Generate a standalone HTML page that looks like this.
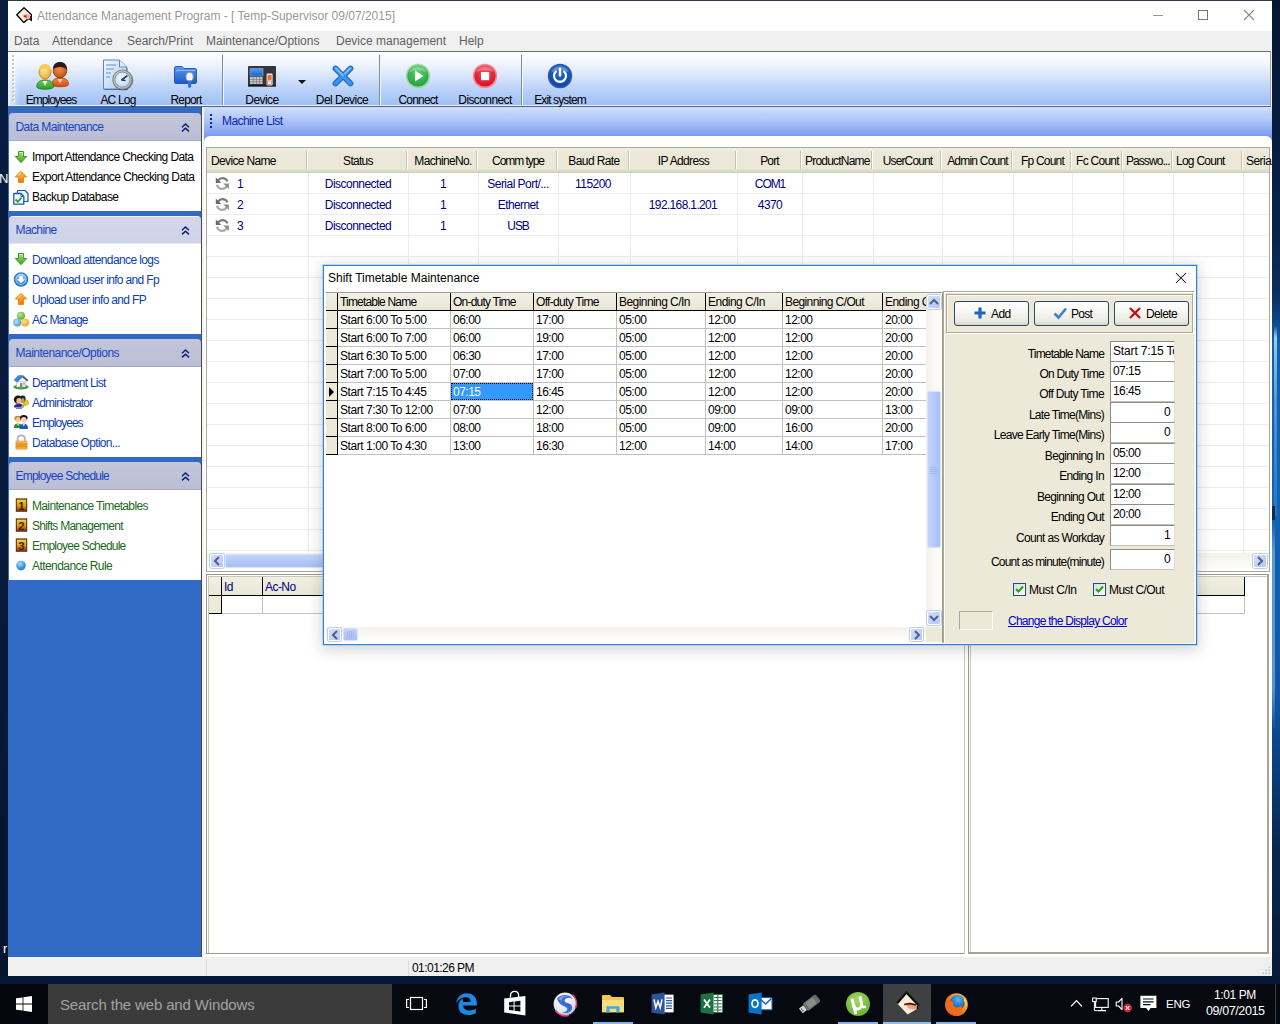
<!DOCTYPE html>
<html>
<head>
<meta charset="utf-8">
<title>Attendance Management Program</title>
<style>
*{box-sizing:border-box;margin:0;padding:0}
html,body{width:1280px;height:1024px;overflow:hidden}
body{position:relative;font-family:"Liberation Sans",sans-serif;font-size:12px;color:#000;background:#0a1d3a}
body>div,body>svg{position:absolute}
.t{white-space:nowrap;line-height:14px;height:14px;font-size:12px;letter-spacing:-0.55px}
.s{white-space:nowrap;line-height:16px;height:16px;font-size:12px}
.c{text-align:center}
.r{text-align:right}
.nv{color:#000080}
</style>
</head>
<body>
<div style="left:0px;top:0px;width:1280px;height:984px;background:#0a1a34"></div>
<div style="left:0px;top:0px;width:8px;height:984px;background:linear-gradient(180deg,#081c40 0%,#071a3a 60%,#06142c 100%)"></div>
<div style="left:1272px;top:0px;width:8px;height:984px;background:linear-gradient(180deg,#051630 0%,#071c3e 14%,#08244c 24%,#0b2e60 30%,#1260b0 35%,#1262b4 50%,#1058a6 70%,#0c4488 76%,#09284f 86%,#071a38 100%)"></div>
<div style="left:1274px;top:326px;width:3px;height:190px;background:linear-gradient(180deg,rgba(150,215,245,0) 0%,rgba(150,215,245,.95) 6%,rgba(120,190,240,.6) 40%,rgba(90,170,230,.25) 100%)"></div>
<div style="left:1272px;top:506px;width:3px;height:14px;background:#0a2a58"></div>
<div style="left:1272px;top:520px;width:3px;height:210px;background:linear-gradient(180deg,rgba(110,175,225,.0),rgba(110,175,225,.75) 15%,rgba(110,175,225,.7) 80%,rgba(110,175,225,0))"></div>
<div style="left:0px;top:976px;width:1280px;height:8px;background:#06183a"></div>
<div class="s" style="left:0px;top:171px;color:#fff;font-size:13px;letter-spacing:0;left:-1px">N</div>
<div class="s" style="left:0px;top:941px;color:#fff;font-size:13px;letter-spacing:0;left:3px">r</div>
<div style="left:8px;top:0px;width:1264px;height:976px;background:#f0f0f0;border-top:1px solid #2b3a4f"></div>
<div style="left:8px;top:1px;width:1264px;height:30px;background:#fff"></div>
<svg style="left:16px;top:7px;" width="16" height="16" viewBox="0 0 16 16"><path d="M8 0.8L15.4 7.6V13.2L12.6 11.4L7.8 15.6L0.8 7.8Z" fill="#f6ecdc" stroke="#0a0a0a" stroke-width="1.4" stroke-linejoin="miter"/><ellipse cx="11" cy="9.6" rx="3.6" ry="2.6" fill="#efb9a0"/><path d="M7.4 8.6L10.6 8.2L10.8 10.4L8.6 10.2Z" fill="#b02814"/><path d="M14.6 9V12.6" stroke="#4a2a1a" stroke-width="1.2"/></svg>
<div class="s" style="left:37px;top:8px;color:#999;letter-spacing:0">Attendance Management Program - [ Temp-Supervisor 09/07/2015]</div>
<svg style="left:1152px;top:9px;" width="12" height="12" viewBox="0 0 12 12"><path d="M1 6.5H11" stroke="#999" stroke-width="1" fill="none"/></svg>
<svg style="left:1197px;top:9px;" width="12" height="12" viewBox="0 0 12 12"><rect x="1.5" y="1.5" width="9" height="9" stroke="#777" stroke-width="1" fill="none"/></svg>
<svg style="left:1243px;top:9px;" width="12" height="12" viewBox="0 0 12 12"><path d="M1 1L11 11M11 1L1 11" stroke="#888" stroke-width="1.1" fill="none"/></svg>
<div class="s" style="left:14px;top:33px;color:#606060;letter-spacing:0">Data</div>
<div class="s" style="left:52px;top:33px;color:#606060;letter-spacing:0">Attendance</div>
<div class="s" style="left:127px;top:33px;color:#606060;letter-spacing:0">Search/Print</div>
<div class="s" style="left:206px;top:33px;color:#606060;letter-spacing:0">Maintenance/Options</div>
<div class="s" style="left:336px;top:33px;color:#606060;letter-spacing:0">Device management</div>
<div class="s" style="left:459px;top:33px;color:#606060;letter-spacing:0">Help</div>
<div style="left:8px;top:51px;width:1263px;height:56px;border-top:1px solid #6d6d6d;border-bottom:1px solid #5a6478;border-right:1px solid #9aa;box-shadow:inset 0 -1px 0 #e8f0fd;background:linear-gradient(180deg,#fdfeff 0%,#f2f6fd 20%,#dce7fb 42%,#bcd2f8 68%,#9cc0f6 100%)"></div>
<div style="left:8px;top:52px;width:12px;height:53px;background:linear-gradient(90deg,rgba(255,255,255,.75),rgba(255,255,255,0))"></div>
<svg style="left:11px;top:54px;" width="5" height="50" viewBox="0 0 5 50"><rect x="2" y="2" width="2" height="2" fill="#fff"/><rect x="1" y="1" width="2" height="2" fill="#b9ccc6"/><rect x="2" y="6" width="2" height="2" fill="#fff"/><rect x="1" y="5" width="2" height="2" fill="#b9ccc6"/><rect x="2" y="10" width="2" height="2" fill="#fff"/><rect x="1" y="9" width="2" height="2" fill="#b9ccc6"/><rect x="2" y="14" width="2" height="2" fill="#fff"/><rect x="1" y="13" width="2" height="2" fill="#b9ccc6"/><rect x="2" y="18" width="2" height="2" fill="#fff"/><rect x="1" y="17" width="2" height="2" fill="#b9ccc6"/><rect x="2" y="22" width="2" height="2" fill="#fff"/><rect x="1" y="21" width="2" height="2" fill="#b9ccc6"/><rect x="2" y="26" width="2" height="2" fill="#fff"/><rect x="1" y="25" width="2" height="2" fill="#b9ccc6"/><rect x="2" y="30" width="2" height="2" fill="#fff"/><rect x="1" y="29" width="2" height="2" fill="#b9ccc6"/><rect x="2" y="34" width="2" height="2" fill="#fff"/><rect x="1" y="33" width="2" height="2" fill="#b9ccc6"/><rect x="2" y="38" width="2" height="2" fill="#fff"/><rect x="1" y="37" width="2" height="2" fill="#b9ccc6"/><rect x="2" y="42" width="2" height="2" fill="#fff"/><rect x="1" y="41" width="2" height="2" fill="#b9ccc6"/><rect x="2" y="46" width="2" height="2" fill="#fff"/><rect x="1" y="45" width="2" height="2" fill="#b9ccc6"/></svg>
<div class="t c" style="left:-49px;top:93px;width:200px;;letter-spacing:-0.97px">Employees</div>
<div class="t c" style="left:18px;top:93px;width:200px;;letter-spacing:-0.81px">AC Log</div>
<div class="t c" style="left:86px;top:93px;width:200px;;letter-spacing:-0.81px">Report</div>
<div class="t c" style="left:162px;top:93px;width:200px;;letter-spacing:-0.54px">Device</div>
<div class="t c" style="left:242px;top:93px;width:200px;;letter-spacing:-0.56px">Del Device</div>
<div class="t c" style="left:318px;top:93px;width:200px;;letter-spacing:-0.78px">Connect</div>
<div class="t c" style="left:385px;top:93px;width:200px;;letter-spacing:-0.6px">Disconnect</div>
<div class="t c" style="left:460px;top:93px;width:200px;;letter-spacing:-0.88px">Exit system</div>
<div style="left:222px;top:55px;width:2px;height:50px;border-left:1px solid #7f8ca8;border-right:1px solid #f4f7fd"></div>
<div style="left:379px;top:55px;width:2px;height:50px;border-left:1px solid #7f8ca8;border-right:1px solid #f4f7fd"></div>
<div style="left:521px;top:55px;width:2px;height:50px;border-left:1px solid #7f8ca8;border-right:1px solid #f4f7fd"></div>
<svg style="left:297px;top:79px;" width="10" height="6" viewBox="0 0 10 6"><path d="M1 1H9L5 5Z" fill="#111"/></svg>
<svg style="left:36px;top:60px;" width="34" height="31" viewBox="0 0 34 31"><defs><radialGradient id="tbA" cx=".4" cy=".35" r=".7"><stop offset="0" stop-color="#fde9a0"/><stop offset="1" stop-color="#e8a830"/></radialGradient><radialGradient id="tbB" cx=".45" cy=".4" r=".7"><stop offset="0" stop-color="#f09048"/><stop offset="1" stop-color="#b84810"/></radialGradient><linearGradient id="tbC" x1="0" y1="0" x2="0" y2="1"><stop offset="0" stop-color="#6cd058"/><stop offset="1" stop-color="#2a9a28"/></linearGradient><linearGradient id="tbD" x1="0" y1="0" x2="0" y2="1"><stop offset="0" stop-color="#f88838"/><stop offset="1" stop-color="#d84810"/></linearGradient></defs><path d="M16 24.5C16 19.5 19 18 24 18S32.5 19.5 32.5 24.5C32.5 27.5 16 27.5 16 24.5Z" fill="url(#tbD)" stroke="#a83808" stroke-width=".8"/><path d="M21.5 19L24 23.5L26.5 19Z" fill="#f4e0d0"/><ellipse cx="24" cy="10.5" rx="6.8" ry="7.4" fill="url(#tbB)" stroke="#7a3410" stroke-width=".8"/><path d="M17 9.5C17 4 20 2 24 2S31.2 4.5 31 10C29 6.5 21 6 17 9.5Z" fill="#2a1a10"/><path d="M0.8 27C0.8 22 3.8 20 9 20S17.5 22 17.5 27C17.5 30 0.8 30 0.8 27Z" fill="url(#tbC)" stroke="#1c7a20" stroke-width=".8"/><path d="M6.5 21L9 26L11.5 21Z" fill="#eef4e8"/><ellipse cx="9" cy="12" rx="6" ry="7" fill="url(#tbA)" stroke="#d08418" stroke-width=".9"/><path d="M2.8 11C2.8 6 5.5 4.2 9 4.2S15.4 6 15.2 11C13.5 8 5 7.6 2.8 11Z" fill="#f4cc50"/></svg>
<svg style="left:102px;top:59px;" width="33" height="33" viewBox="0 0 33 33"><defs><linearGradient id="tbE" x1="0" y1="0" x2="1" y2="1"><stop offset="0" stop-color="#f4f9ff"/><stop offset="1" stop-color="#a8c8f0"/></linearGradient><radialGradient id="tbF" cx=".45" cy=".4" r=".6"><stop offset="0" stop-color="#f4fbff"/><stop offset="1" stop-color="#b8dcf4"/></radialGradient></defs><path d="M2.5 2H18.5L25.5 9V31H2.5Z" fill="#1c2c50" opacity=".75"/><path d="M1.5 1H17.5L24.5 8V30H1.5Z" fill="url(#tbE)" stroke="#5a86c8" stroke-width="1"/><path d="M17.5 1V8H24.5" fill="#dcecfc" stroke="#5a86c8" stroke-width="1"/><path d="M4 6H14M4 10H12M4 14H9M4 18H8" stroke="#88b0e4" stroke-width="1.4"/><circle cx="21" cy="21.2" r="10.2" fill="#3a3a3a" opacity=".7"/><circle cx="20.4" cy="20.6" r="10.2" fill="#8a8a8a"/><circle cx="20.4" cy="20.6" r="9" fill="#c8c8c8"/><circle cx="20.4" cy="20.6" r="7.6" fill="url(#tbF)" stroke="#7a7a7a" stroke-width=".8"/><path d="M19.4 21L25.4 16.6" stroke="#2a3a4a" stroke-width="1.7"/><path d="M19.4 21L23.6 21.4" stroke="#2a3a4a" stroke-width="1.5"/></svg>
<svg style="left:173px;top:65px;" width="26" height="24" viewBox="0 0 26 24"><defs><linearGradient id="tbG" x1="0" y1="0" x2="0" y2="1"><stop offset="0" stop-color="#5a9af0"/><stop offset="1" stop-color="#1c58c8"/></linearGradient></defs><path d="M1.5 3C1.5 2 2 1.5 3 1.5H9L11 3.5H22C23 3.5 23.5 4 23.5 5V17C23.5 18 23 18.5 22 18.5H3C2 18.5 1.5 18 1.5 17Z" fill="url(#tbG)" stroke="#2a5ab8" stroke-width="1"/><path d="M3 5.5H22" stroke="#8ab8f8" stroke-width="1"/><ellipse cx="16.6" cy="11.8" rx="3.6" ry="4.4" fill="#f4f4ec" stroke="#9a9a8a" stroke-width=".8"/><path d="M15 15.6H18.2V22L16.6 23L15 22Z" fill="#2a78e0"/></svg>
<svg style="left:248px;top:65px;" width="29" height="23" viewBox="0 0 29 23"><defs><linearGradient id="tbH" x1="0" y1="0" x2="0" y2="1"><stop offset="0" stop-color="#4aa0f0"/><stop offset="1" stop-color="#1c60c8"/></linearGradient></defs><rect x="0" y="1" width="28" height="20.5" rx="1" fill="#33363c"/><rect x="0" y="19.5" width="28" height="2" fill="#1c1e22"/><rect x="2" y="3.5" width="13" height="7.5" fill="url(#tbH)" stroke="#9ab" stroke-width=".6"/><rect x="2" y="12" width="12.5" height="7" fill="#c8c8c8"/><path d="M2 14.4H14.5M2 16.8H14.5M5.2 12V19M8.4 12V19M11.6 12V19" stroke="#777" stroke-width=".7"/><rect x="18.6" y="8.5" width="6" height="12" rx="1" fill="#e8e8e8"/><rect x="19.6" y="10" width="4" height="5" fill="#e87028"/><rect x="19.6" y="16" width="4" height="3.6" fill="#f4f4f4" stroke="#c33" stroke-width=".5"/></svg>
<svg style="left:331px;top:64px;" width="24" height="24" viewBox="0 0 24 24"><path d="M4.5 4.5L19.5 19.5M19.5 4.5L4.5 19.5" stroke="#1c62c8" stroke-width="5.8" stroke-linecap="round" fill="none"/><path d="M4.5 4.5L19.5 19.5M19.5 4.5L4.5 19.5" stroke="#3c94f0" stroke-width="3.8" stroke-linecap="round" fill="none"/><path d="M4.8 4.2L12 11.4M19.2 4.2L14 9.4" stroke="#8ac4fa" stroke-width="1.6" stroke-linecap="round" fill="none"/></svg>
<svg style="left:405px;top:63px;" width="26" height="26" viewBox="0 0 26 26"><defs><radialGradient id="tbI" cx=".5" cy=".3" r=".8"><stop offset="0" stop-color="#5cd070"/><stop offset="1" stop-color="#1c9838"/></radialGradient></defs><circle cx="13" cy="13" r="12.2" fill="#9cd8a4"/><circle cx="13" cy="13" r="10.6" fill="url(#tbI)"/><path d="M4 9.5A9.6 9.6 0 0 1 22 9.5A14 10 0 0 0 4 9.5Z" fill="#fff" opacity=".28"/><path d="M10 7.5L18.5 13L10 18.5Z" fill="#fff"/></svg>
<svg style="left:472px;top:63px;" width="26" height="26" viewBox="0 0 26 26"><defs><radialGradient id="tbJ" cx=".5" cy=".3" r=".8"><stop offset="0" stop-color="#f8485c"/><stop offset="1" stop-color="#d00c20"/></radialGradient></defs><circle cx="13" cy="13" r="12.2" fill="#f08a94"/><circle cx="13" cy="13" r="10.6" fill="url(#tbJ)"/><path d="M4 9.5A9.6 9.6 0 0 1 22 9.5A14 10 0 0 0 4 9.5Z" fill="#fff" opacity=".28"/><rect x="9" y="9" width="8.2" height="8.2" fill="#fff"/></svg>
<svg style="left:547px;top:63px;" width="26" height="26" viewBox="0 0 26 26"><defs><radialGradient id="tbK" cx=".5" cy=".3" r=".8"><stop offset="0" stop-color="#2c6cd8"/><stop offset="1" stop-color="#0c3c9c"/></radialGradient></defs><circle cx="13" cy="13" r="12.2" fill="#2a58b0"/><circle cx="13" cy="13" r="10.6" fill="url(#tbK)"/><path d="M4 9.5A9.6 9.6 0 0 1 22 9.5A14 10 0 0 0 4 9.5Z" fill="#fff" opacity=".28"/><path d="M8.8 8.6A6 6 0 1 0 17.2 8.6" stroke="#fff" stroke-width="2.2" fill="none" stroke-linecap="round"/><path d="M13 5.6V12.4" stroke="#fff" stroke-width="2.4" stroke-linecap="round"/></svg>
<div style="left:8px;top:107px;width:193px;height:850px;background:#316ac5"></div>
<div style="left:201px;top:107px;width:3px;height:850px;background:#f4f4f4;border-left:1px solid #4a4a4a"></div>
<div style="left:9px;top:113px;width:192px;height:28px;background:linear-gradient(180deg,#c3c6d9 0%,#bbbed5 100%);border-radius:4px 4px 0 0;border-bottom:1px solid #a4a8c0"></div>
<div class="t" style="left:15.5px;top:120px;color:#1444c4;letter-spacing:-0.59px">Data Maintenance</div>
<svg style="left:180px;top:122px;" width="10" height="11" viewBox="0 0 10 11"><path d="M2 5.2L5.5 2L9 5.2M2 9.4L5.5 6.2L9 9.4" stroke="#0c2078" stroke-width="1.5" fill="none"/></svg>
<div style="left:9px;top:141px;width:192px;height:70px;background:#fff;border-top:1px solid #fff"></div>
<div class="t" style="left:32px;top:150px;color:#000;letter-spacing:-0.58px">Import Attendance Checking Data</div>
<svg style="left:13px;top:148.6px;" width="16" height="16" viewBox="0 0 16 16"><defs><linearGradient id="g1" x1="0" y1="0" x2="0" y2="1"><stop offset="0" stop-color="#a4e57e"/><stop offset="1" stop-color="#3fa024"/></linearGradient></defs><path d="M5.5 2.5H10.5V7.5H13.7L8 13.7L2.3 7.5H5.5Z" fill="url(#g1)" stroke="#3c9a28" stroke-width="1" stroke-linejoin="round"/><path d="M6.5 3.5H9.5V6" stroke="#d8f7c4" stroke-width="1" fill="none" opacity=".8"/></svg>
<div class="t" style="left:32px;top:170px;color:#000;letter-spacing:-0.57px">Export Attendance Checking Data</div>
<svg style="left:13px;top:168.6px;" width="16" height="16" viewBox="0 0 16 16"><defs><linearGradient id="g2" x1="0" y1="0" x2="0" y2="1"><stop offset="0" stop-color="#ffc24a"/><stop offset="1" stop-color="#f07408"/></linearGradient></defs><path d="M8 2.3L13.7 8H10.5V13.5H5.5V8H2.3Z" fill="url(#g2)" stroke="#f08a18" stroke-width="1" stroke-linejoin="round"/><path d="M8 4L5 7" stroke="#ffe6a8" stroke-width="1" fill="none" opacity=".8"/></svg>
<div class="t" style="left:32px;top:190px;color:#000;letter-spacing:-0.55px">Backup Database</div>
<svg style="left:13px;top:188.6px;" width="16" height="16" viewBox="0 0 16 16"><path d="M4.5 1.5H12L15 4.5V12.5H4.5Z" fill="#e8f2fc" stroke="#1c5aa8" stroke-width="1.2" stroke-linejoin="round"/><path d="M0.8 4.5H8L10.8 7.5V15.2H0.8Z" fill="#f2fafe" stroke="#1c5aa8" stroke-width="1.3" stroke-linejoin="round"/><path d="M8 4.5V7.5H10.8" fill="none" stroke="#1c5aa8" stroke-width="1"/><path d="M2.5 10.5L4.8 12.8L8.5 8.6" stroke="#2ea02e" stroke-width="1.8" fill="none"/></svg>
<div style="left:9px;top:216px;width:192px;height:28px;background:linear-gradient(180deg,#d8d2ea 0%,#d2d6ea 30%,#cdd2e8 100%);border-radius:4px 4px 0 0;border-bottom:1px solid #e4e6f2;border-top:1px solid #f4f6fc"></div>
<div class="t" style="left:15.5px;top:223px;color:#1444c4;letter-spacing:-0.61px">Machine</div>
<svg style="left:180px;top:225px;" width="10" height="11" viewBox="0 0 10 11"><path d="M2 5.2L5.5 2L9 5.2M2 9.4L5.5 6.2L9 9.4" stroke="#0c2078" stroke-width="1.5" fill="none"/></svg>
<div style="left:9px;top:244px;width:192px;height:90px;background:#fff;border-top:1px solid #fff"></div>
<div class="t" style="left:32px;top:253px;color:#0a3cb8;letter-spacing:-0.61px">Download attendance logs</div>
<svg style="left:13px;top:251.2px;" width="16" height="16" viewBox="0 0 16 16"><defs><linearGradient id="g4" x1="0" y1="0" x2="0" y2="1"><stop offset="0" stop-color="#a4e57e"/><stop offset="1" stop-color="#3fa024"/></linearGradient></defs><path d="M5.5 2.5H10.5V7.5H13.7L8 13.7L2.3 7.5H5.5Z" fill="url(#g4)" stroke="#3c9a28" stroke-width="1" stroke-linejoin="round"/><path d="M6.5 3.5H9.5V6" stroke="#d8f7c4" stroke-width="1" fill="none" opacity=".8"/></svg>
<div class="t" style="left:32px;top:273px;color:#0a3cb8;letter-spacing:-0.66px">Download user info and Fp</div>
<svg style="left:13px;top:271.2px;" width="16" height="16" viewBox="0 0 16 16"><defs><linearGradient id="g5" x1="0" y1="0" x2="0" y2="1"><stop offset="0" stop-color="#9fd0f8"/><stop offset="1" stop-color="#2878d0"/></linearGradient></defs><circle cx="8" cy="8.5" r="6.6" fill="url(#g5)" stroke="#2a78c8" stroke-width="1.3"/><circle cx="8" cy="8.5" r="5" fill="none" stroke="#d6ecfd" stroke-width=".8" opacity=".7"/><path d="M6.3 5H9.7V8.3H12L8 12.3L4 8.3H6.3Z" fill="#fff"/></svg>
<div class="t" style="left:32px;top:293px;color:#0a3cb8;letter-spacing:-0.67px">Upload user info and FP</div>
<svg style="left:13px;top:291.2px;" width="16" height="16" viewBox="0 0 16 16"><defs><linearGradient id="g6" x1="0" y1="0" x2="0" y2="1"><stop offset="0" stop-color="#ffc24a"/><stop offset="1" stop-color="#f07408"/></linearGradient></defs><path d="M8 2.3L13.7 8H10.5V13.5H5.5V8H2.3Z" fill="url(#g6)" stroke="#f08a18" stroke-width="1" stroke-linejoin="round"/><path d="M8 4L5 7" stroke="#ffe6a8" stroke-width="1" fill="none" opacity=".8"/></svg>
<div class="t" style="left:32px;top:313px;color:#0a3cb8;letter-spacing:-0.86px">AC Manage</div>
<svg style="left:13px;top:311.2px;" width="16" height="16" viewBox="0 0 16 16"><defs><radialGradient id="g7" cx=".4" cy=".35" r=".7"><stop offset="0" stop-color="#b8ee88"/><stop offset="1" stop-color="#4aa828"/></radialGradient><radialGradient id="g8" cx=".4" cy=".35" r=".7"><stop offset="0" stop-color="#b8e2fc"/><stop offset="1" stop-color="#3c94dc"/></radialGradient><radialGradient id="g9" cx=".4" cy=".35" r=".7"><stop offset="0" stop-color="#ffe488"/><stop offset="1" stop-color="#f0a010"/></radialGradient></defs><circle cx="8" cy="4.8" r="4" fill="url(#g7)"/><circle cx="4.2" cy="11.6" r="4" fill="url(#g8)"/><circle cx="12" cy="11.6" r="4" fill="url(#g9)"/></svg>
<div style="left:9px;top:339px;width:192px;height:28px;background:linear-gradient(180deg,#c3c6d9 0%,#bbbed5 100%);border-radius:4px 4px 0 0;border-bottom:1px solid #a4a8c0"></div>
<div class="t" style="left:15.5px;top:346px;color:#1444c4;letter-spacing:-0.52px">Maintenance/Options</div>
<svg style="left:180px;top:348px;" width="10" height="11" viewBox="0 0 10 11"><path d="M2 5.2L5.5 2L9 5.2M2 9.4L5.5 6.2L9 9.4" stroke="#0c2078" stroke-width="1.5" fill="none"/></svg>
<div style="left:9px;top:367px;width:192px;height:90px;background:#fff;border-top:1px solid #fff"></div>
<div class="t" style="left:32px;top:376px;color:#0a3cb8;letter-spacing:-0.74px">Department List</div>
<svg style="left:13px;top:374.2px;" width="16" height="16" viewBox="0 0 16 16"><ellipse cx="8" cy="13" rx="7.6" ry="2.4" fill="#3e9a40"/><path d="M3.5 7.5H12.5V13H3.5Z" fill="#f4f4f0" stroke="#9aa" stroke-width=".5"/><path d="M0.6 6.2L5.2 1.2H10.2L15.4 6.2L13.6 7.4L9.6 3.2L4.2 8.6Z" fill="#3c84d8"/><path d="M9.7 3L14.8 6.6" stroke="#555" stroke-width="1.2"/><rect x="7" y="9" width="2.4" height="4" fill="#8a8a80"/><rect x="10.2" y="8.6" width="1.6" height="2" fill="#9ab"/></svg>
<div class="t" style="left:32px;top:396px;color:#0a3cb8;letter-spacing:-0.79px">Administrator</div>
<svg style="left:13px;top:394.2px;" width="16" height="16" viewBox="0 0 16 16"><ellipse cx="5.2" cy="5.6" rx="4.4" ry="4.2" fill="#141414"/><ellipse cx="9.6" cy="5" rx="3" ry="3.4" fill="#222"/><ellipse cx="6" cy="6.8" rx="2.7" ry="2.9" fill="#e8c080"/><ellipse cx="9.8" cy="6.6" rx="1.8" ry="2.5" fill="#c89858"/><path d="M1 13.5C1 10.5 3 9.8 6 9.8S10.5 10.5 10.5 13.5Z" fill="#2a2a90"/><path d="M3 14.4H9" stroke="#6a8ad8" stroke-width="1.2"/><path d="M10.2 8.6L14.6 6.2L15.8 9.8L12 11.6Z" fill="#e8d020" stroke="#a89000" stroke-width=".6"/><path d="M8.4 13.4L11.6 10.4" stroke="#c8a810" stroke-width="1.8"/></svg>
<div class="t" style="left:32px;top:416px;color:#0a3cb8;letter-spacing:-0.97px">Employees</div>
<svg style="left:13px;top:414.2px;" width="16" height="16" viewBox="0 0 16 16"><ellipse cx="4.8" cy="4.4" rx="3.4" ry="2.6" fill="#b88a2c"/><ellipse cx="5" cy="5.8" rx="2.5" ry="2.6" fill="#f0c890"/><path d="M0.8 14C0.8 10.6 2.4 9.4 5 9.4S8.6 10.6 8.6 14Z" fill="#2e8a30"/><path d="M3.6 9.6L5 12L6.2 9.6Z" fill="#e8f0e8"/><ellipse cx="10.8" cy="3.8" rx="3.8" ry="2.8" fill="#161616"/><ellipse cx="10.8" cy="5.8" rx="2.8" ry="2.9" fill="#f4cfc0"/><path d="M6.6 15C6.6 11.2 8 9.8 10.8 9.8S15 11.2 15 15Z" fill="#1c5ab8"/><path d="M9.6 10L10.8 12.4L12 10Z" fill="#e4ecf8"/></svg>
<div class="t" style="left:32px;top:436px;color:#0a3cb8;letter-spacing:-0.68px">Database Option...</div>
<svg style="left:13px;top:434.2px;" width="16" height="16" viewBox="0 0 16 16"><defs><linearGradient id="g13" x1="0" y1="0" x2="0" y2="1"><stop offset="0" stop-color="#f8c060"/><stop offset=".5" stop-color="#f09a28"/><stop offset="1" stop-color="#f4b050"/></linearGradient></defs><path d="M4.6 8V4.6C4.6 2.6 6 1.4 8.2 1.4S11.8 2.6 11.8 4.6V8" stroke="#b4b4b4" stroke-width="1.8" fill="none"/><rect x="2.8" y="7" width="11.4" height="8.2" rx=".8" fill="url(#g13)" stroke="#e89838" stroke-width=".6"/><path d="M3 10H14M3 12.4H14" stroke="#e08418" stroke-width=".8"/></svg>
<div style="left:9px;top:462px;width:192px;height:28px;background:linear-gradient(180deg,#c3c6d9 0%,#bbbed5 100%);border-radius:4px 4px 0 0;border-bottom:1px solid #a4a8c0"></div>
<div class="t" style="left:15.5px;top:469px;color:#1444c4;letter-spacing:-0.78px">Employee Schedule</div>
<svg style="left:180px;top:471px;" width="10" height="11" viewBox="0 0 10 11"><path d="M2 5.2L5.5 2L9 5.2M2 9.4L5.5 6.2L9 9.4" stroke="#0c2078" stroke-width="1.5" fill="none"/></svg>
<div style="left:9px;top:490px;width:192px;height:90px;background:#fff;border-top:1px solid #fff"></div>
<div class="t" style="left:32px;top:499px;color:#1a6a1a;letter-spacing:-0.65px">Maintenance Timetables</div>
<svg style="left:13px;top:497.2px;" width="16" height="16" viewBox="0 0 16 16"><defs><linearGradient id="g14" x1="0" y1="0" x2="0" y2="1"><stop offset="0" stop-color="#f0d428"/><stop offset=".55" stop-color="#d8a018"/><stop offset="1" stop-color="#8a4a10"/></linearGradient></defs><rect x="2.8" y="1.4" width="11.4" height="13.4" fill="#5a2810"/><rect x="3.8" y="2.6" width="9.4" height="11" fill="url(#g14)"/><text x="8.5" y="12.6" text-anchor="middle" font-family="Liberation Sans" font-weight="bold" font-size="11.5" fill="#4a1c08">1</text></svg>
<div class="t" style="left:32px;top:519px;color:#1a6a1a;letter-spacing:-0.74px">Shifts Management</div>
<svg style="left:13px;top:517.2px;" width="16" height="16" viewBox="0 0 16 16"><defs><linearGradient id="g15" x1="0" y1="0" x2="0" y2="1"><stop offset="0" stop-color="#f0d428"/><stop offset=".55" stop-color="#d8a018"/><stop offset="1" stop-color="#8a4a10"/></linearGradient></defs><rect x="2.8" y="1.4" width="11.4" height="13.4" fill="#5a2810"/><rect x="3.8" y="2.6" width="9.4" height="11" fill="url(#g15)"/><text x="8.5" y="12.6" text-anchor="middle" font-family="Liberation Sans" font-weight="bold" font-size="11.5" fill="#4a1c08">2</text></svg>
<div class="t" style="left:32px;top:539px;color:#1a6a1a;letter-spacing:-0.78px">Employee Schedule</div>
<svg style="left:13px;top:537.2px;" width="16" height="16" viewBox="0 0 16 16"><defs><linearGradient id="g16" x1="0" y1="0" x2="0" y2="1"><stop offset="0" stop-color="#f0d428"/><stop offset=".55" stop-color="#d8a018"/><stop offset="1" stop-color="#8a4a10"/></linearGradient></defs><rect x="2.8" y="1.4" width="11.4" height="13.4" fill="#5a2810"/><rect x="3.8" y="2.6" width="9.4" height="11" fill="url(#g16)"/><text x="8.5" y="12.6" text-anchor="middle" font-family="Liberation Sans" font-weight="bold" font-size="11.5" fill="#4a1c08">3</text></svg>
<div class="t" style="left:32px;top:559px;color:#1a6a1a;letter-spacing:-0.57px">Attendance Rule</div>
<svg style="left:13px;top:557.2px;" width="16" height="16" viewBox="0 0 16 16"><defs><radialGradient id="g17" cx=".4" cy=".3" r=".75"><stop offset="0" stop-color="#a8dcfc"/><stop offset=".6" stop-color="#3c9ae8"/><stop offset="1" stop-color="#2a78d0"/></radialGradient></defs><circle cx="8" cy="8.6" r="4.8" fill="url(#g17)"/></svg>
<div style="left:204px;top:107px;width:1068px;height:29px;background:linear-gradient(180deg,#cfdefb 0%,#b3c9f8 40%,#7d9cf0 100%)"></div>
<div style="left:204px;top:136px;width:1068px;height:8px;background:#7d9cf0"></div>
<svg style="left:209px;top:113px;" width="4" height="16" viewBox="0 0 4 16"><rect x="1" y="1" width="2" height="2" fill="#1a2a80"/><rect x="1" y="5" width="2" height="2" fill="#1a2a80"/><rect x="1" y="9" width="2" height="2" fill="#1a2a80"/><rect x="1" y="13" width="2" height="2" fill="#1a2a80"/></svg>
<div class="t" style="left:222px;top:114px;color:#0a1eb4;letter-spacing:-0.58px">Machine List</div>
<div style="left:204px;top:136px;width:1068px;height:821px;background:#fff;border-radius:6px 6px 0 0"></div>
<div style="left:204px;top:143px;width:1068px;height:814px;background:#fff"></div>
<div style="left:206px;top:147px;width:1064px;height:425px;border:1px solid #aca899;border-top-color:#aca899;background:#fff"></div>
<div style="left:207px;top:148px;width:1062px;height:25px;background:linear-gradient(180deg,#f1eee2 0%,#ebe8d8 20%,#ebe8d8 82%,#deddcb 90%,#cfccbc 100%)"></div>
<div class="t" style="left:211px;top:154px;;letter-spacing:-0.65px">Device Name</div>
<div style="left:306px;top:151px;width:2px;height:18px;border-left:1px solid #c5c2b2;border-right:1px solid #fff"></div>
<div class="t c" style="left:258.0px;top:154px;width:200px;;letter-spacing:-0.71px">Status</div>
<div style="left:406px;top:151px;width:2px;height:18px;border-left:1px solid #c5c2b2;border-right:1px solid #fff"></div>
<div class="t c" style="left:343.0px;top:154px;width:200px;;letter-spacing:-0.67px">MachineNo.</div>
<div style="left:476px;top:151px;width:2px;height:18px;border-left:1px solid #c5c2b2;border-right:1px solid #fff"></div>
<div class="t c" style="left:418.0px;top:154px;width:200px;;letter-spacing:-1.04px">Comm type</div>
<div style="left:556px;top:151px;width:2px;height:18px;border-left:1px solid #c5c2b2;border-right:1px solid #fff"></div>
<div class="t c" style="left:494.0px;top:154px;width:200px;;letter-spacing:-0.59px">Baud Rate</div>
<div style="left:628px;top:151px;width:2px;height:18px;border-left:1px solid #c5c2b2;border-right:1px solid #fff"></div>
<div class="t c" style="left:583.5px;top:154px;width:200px;;letter-spacing:-0.65px">IP Address</div>
<div style="left:735px;top:151px;width:2px;height:18px;border-left:1px solid #c5c2b2;border-right:1px solid #fff"></div>
<div class="t c" style="left:669.5px;top:154px;width:200px;;letter-spacing:-0.84px">Port</div>
<div style="left:800px;top:151px;width:2px;height:18px;border-left:1px solid #c5c2b2;border-right:1px solid #fff"></div>
<div class="t" style="left:805px;top:154px;;letter-spacing:-0.79px">ProductName</div>
<div style="left:871px;top:151px;width:2px;height:18px;border-left:1px solid #c5c2b2;border-right:1px solid #fff"></div>
<div class="t c" style="left:807.5px;top:154px;width:200px;;letter-spacing:-0.86px">UserCount</div>
<div style="left:940px;top:151px;width:2px;height:18px;border-left:1px solid #c5c2b2;border-right:1px solid #fff"></div>
<div class="t c" style="left:877.5px;top:154px;width:200px;;letter-spacing:-0.79px">Admin Count</div>
<div style="left:1011px;top:151px;width:2px;height:18px;border-left:1px solid #c5c2b2;border-right:1px solid #fff"></div>
<div class="t c" style="left:942.5px;top:154px;width:200px;;letter-spacing:-0.77px">Fp Count</div>
<div style="left:1070px;top:151px;width:2px;height:18px;border-left:1px solid #c5c2b2;border-right:1px solid #fff"></div>
<div class="t c" style="left:997.5px;top:154px;width:200px;;letter-spacing:-0.74px">Fc Count</div>
<div style="left:1121px;top:151px;width:2px;height:18px;border-left:1px solid #c5c2b2;border-right:1px solid #fff"></div>
<div class="t" style="left:1126px;top:154px;;letter-spacing:-0.94px">Passwo...</div>
<div style="left:1171px;top:151px;width:2px;height:18px;border-left:1px solid #c5c2b2;border-right:1px solid #fff"></div>
<div class="t" style="left:1176px;top:154px;;letter-spacing:-0.74px">Log Count</div>
<div style="left:1241px;top:151px;width:2px;height:18px;border-left:1px solid #c5c2b2;border-right:1px solid #fff"></div>
<div class="t" style="left:1246px;top:154px;">Seria</div>
<div style="left:308px;top:173px;width:1px;height:380px;background:#ececec"></div>
<div style="left:408px;top:173px;width:1px;height:380px;background:#ececec"></div>
<div style="left:478px;top:173px;width:1px;height:380px;background:#ececec"></div>
<div style="left:558px;top:173px;width:1px;height:380px;background:#ececec"></div>
<div style="left:630px;top:173px;width:1px;height:380px;background:#ececec"></div>
<div style="left:737px;top:173px;width:1px;height:380px;background:#ececec"></div>
<div style="left:802px;top:173px;width:1px;height:380px;background:#ececec"></div>
<div style="left:873px;top:173px;width:1px;height:380px;background:#ececec"></div>
<div style="left:942px;top:173px;width:1px;height:380px;background:#ececec"></div>
<div style="left:1013px;top:173px;width:1px;height:380px;background:#ececec"></div>
<div style="left:1072px;top:173px;width:1px;height:380px;background:#ececec"></div>
<div style="left:1123px;top:173px;width:1px;height:380px;background:#ececec"></div>
<div style="left:1173px;top:173px;width:1px;height:380px;background:#ececec"></div>
<div style="left:1243px;top:173px;width:1px;height:380px;background:#ececec"></div>
<div style="left:207px;top:193px;width:1062px;height:1px;background:#ececec"></div>
<div style="left:207px;top:214px;width:1062px;height:1px;background:#ececec"></div>
<div style="left:207px;top:235px;width:1062px;height:1px;background:#ececec"></div>
<div style="left:207px;top:256px;width:1062px;height:1px;background:#ececec"></div>
<div style="left:207px;top:277px;width:1062px;height:1px;background:#ececec"></div>
<div style="left:207px;top:298px;width:1062px;height:1px;background:#ececec"></div>
<div style="left:207px;top:319px;width:1062px;height:1px;background:#ececec"></div>
<div style="left:207px;top:340px;width:1062px;height:1px;background:#ececec"></div>
<div style="left:207px;top:361px;width:1062px;height:1px;background:#ececec"></div>
<div style="left:207px;top:382px;width:1062px;height:1px;background:#ececec"></div>
<div style="left:207px;top:403px;width:1062px;height:1px;background:#ececec"></div>
<div style="left:207px;top:424px;width:1062px;height:1px;background:#ececec"></div>
<div style="left:207px;top:445px;width:1062px;height:1px;background:#ececec"></div>
<div style="left:207px;top:466px;width:1062px;height:1px;background:#ececec"></div>
<div style="left:207px;top:487px;width:1062px;height:1px;background:#ececec"></div>
<div style="left:207px;top:508px;width:1062px;height:1px;background:#ececec"></div>
<div style="left:207px;top:529px;width:1062px;height:1px;background:#ececec"></div>
<div style="left:207px;top:550px;width:1062px;height:1px;background:#ececec"></div>
<svg style="left:215px;top:174.5px;" width="15" height="16" viewBox="0 0 15 16"><path d="M12.4 6.4A5.2 5.2 0 0 0 3.2 5.4" stroke="#7c7c7c" stroke-width="2.3" fill="none"/><path d="M0.8 2.6V8.1H6.3Z" fill="#6a6a6a"/><path d="M2 9.8A5.2 5.2 0 0 0 11.6 11.2" stroke="#ababab" stroke-width="2.3" fill="none"/><path d="M8.2 8.4H13.9V14Z" fill="#8c8c8c"/></svg>
<div class="t nv" style="left:237px;top:177px;">1</div>
<div class="t nv c" style="left:258px;top:177px;width:200px;;letter-spacing:-0.52px">Disconnected</div>
<div class="t nv c" style="left:343px;top:177px;width:200px;">1</div>
<div class="t nv c" style="left:418px;top:177px;width:200px;;letter-spacing:-0.53px">Serial Port/...</div>
<div class="t nv c" style="left:493px;top:177px;width:200px;;letter-spacing:-0.53px">115200</div>
<div class="t nv c" style="left:670px;top:177px;width:200px;;letter-spacing:-1.1px">COM1</div>
<svg style="left:215px;top:195.5px;" width="15" height="16" viewBox="0 0 15 16"><path d="M12.4 6.4A5.2 5.2 0 0 0 3.2 5.4" stroke="#7c7c7c" stroke-width="2.3" fill="none"/><path d="M0.8 2.6V8.1H6.3Z" fill="#6a6a6a"/><path d="M2 9.8A5.2 5.2 0 0 0 11.6 11.2" stroke="#ababab" stroke-width="2.3" fill="none"/><path d="M8.2 8.4H13.9V14Z" fill="#8c8c8c"/></svg>
<div class="t nv" style="left:237px;top:198px;">2</div>
<div class="t nv c" style="left:258px;top:198px;width:200px;;letter-spacing:-0.52px">Disconnected</div>
<div class="t nv c" style="left:343px;top:198px;width:200px;">1</div>
<div class="t nv c" style="left:418px;top:198px;width:200px;;letter-spacing:-0.62px">Ethernet</div>
<div class="t nv c" style="left:583px;top:198px;width:200px;;letter-spacing:-0.65px">192.168.1.201</div>
<div class="t nv c" style="left:670px;top:198px;width:200px;;letter-spacing:-0.57px">4370</div>
<svg style="left:215px;top:216.5px;" width="15" height="16" viewBox="0 0 15 16"><path d="M12.4 6.4A5.2 5.2 0 0 0 3.2 5.4" stroke="#7c7c7c" stroke-width="2.3" fill="none"/><path d="M0.8 2.6V8.1H6.3Z" fill="#6a6a6a"/><path d="M2 9.8A5.2 5.2 0 0 0 11.6 11.2" stroke="#ababab" stroke-width="2.3" fill="none"/><path d="M8.2 8.4H13.9V14Z" fill="#8c8c8c"/></svg>
<div class="t nv" style="left:237px;top:219px;">3</div>
<div class="t nv c" style="left:258px;top:219px;width:200px;;letter-spacing:-0.52px">Disconnected</div>
<div class="t nv c" style="left:343px;top:219px;width:200px;">1</div>
<div class="t nv c" style="left:418px;top:219px;width:200px;;letter-spacing:-1.1px">USB</div>
<div style="left:207px;top:553px;width:1062px;height:17px;background:linear-gradient(180deg,#f3f1ec 0%,#fefefb 100%)"></div>
<div style="left:210px;top:554px;width:14px;height:14px;background:linear-gradient(135deg,#d2defa,#b5c8f3);border:1px solid #fff;border-radius:2px;box-shadow:0 0 0 1px #c0ccec"></div>
<svg style="left:213px;top:556px;" width="8" height="10" viewBox="0 0 8 10"><path d="M6 1L2 5L6 9" stroke="#4d6185" stroke-width="2" fill="none"/></svg>
<div style="left:225px;top:554px;width:880px;height:14px;background:linear-gradient(180deg,#c3d4fb 0%,#b5c9f8 50%,#a9c0f5 100%);border:1px solid #d7e2fc;border-radius:2px"></div>
<div style="left:1253px;top:554px;width:14px;height:14px;background:linear-gradient(135deg,#d2defa,#b5c8f3);border:1px solid #fff;border-radius:2px;box-shadow:0 0 0 1px #c0ccec"></div>
<svg style="left:1256px;top:556px;" width="8" height="10" viewBox="0 0 8 10"><path d="M2 1L6 5L2 9" stroke="#4d6185" stroke-width="2" fill="none"/></svg>
<div style="left:206px;top:574px;width:759px;height:380px;border:1px solid #9a978c;background:#fff;box-shadow:inset 1px 1px 0 #fff,inset 2px 2px 0 #c9c6ba"></div>
<div style="left:968px;top:574px;width:301px;height:380px;border:1px solid #9a978c;border-right:2px solid #a8a49a;border-bottom:2px solid #a8a49a;background:#fff;box-shadow:inset 1px 1px 0 #fff,inset 2px 2px 0 #c9c6ba"></div>
<div style="left:964px;top:574px;width:1px;height:380px;background:#c8c5b8"></div>
<div style="left:209px;top:577px;width:756px;height:18px;background:linear-gradient(180deg,#f1efe2,#e9e6d6)"></div>
<div style="left:209px;top:595px;width:756px;height:1px;background:#000"></div>
<div style="left:209px;top:613px;width:756px;height:1px;background:#c0c0c0"></div>
<div style="left:209px;top:596px;width:12px;height:18px;background:#ece9d8"></div>
<div style="left:209px;top:613px;width:13px;height:1px;background:#000"></div>
<div style="left:221px;top:577px;width:1px;height:37px;background:#000"></div>
<div style="left:262px;top:577px;width:1px;height:18px;background:#000"></div>
<div style="left:262px;top:596px;width:1px;height:17px;background:#c0c0c0"></div>
<div class="t nv" style="left:224px;top:580px;">Id</div>
<div class="t nv" style="left:265px;top:580px;">Ac-No</div>
<div style="left:970px;top:577px;width:275px;height:18px;background:linear-gradient(180deg,#f1efe2,#e9e6d6)"></div>
<div style="left:970px;top:595px;width:275px;height:1px;background:#000"></div>
<div style="left:1244px;top:577px;width:1px;height:18px;background:#000"></div>
<div style="left:970px;top:613px;width:275px;height:1px;background:#c0c0c0"></div>
<div style="left:1244px;top:596px;width:1px;height:17px;background:#c0c0c0"></div>
<div style="left:8px;top:957px;width:1264px;height:19px;background:#f0f0f0"></div>
<div style="left:206px;top:960px;width:1px;height:16px;background:#dcdcdc"></div>
<div style="left:408px;top:960px;width:1px;height:16px;background:#dcdcdc"></div>
<div class="t" style="left:412px;top:961px;;letter-spacing:-0.55px">01:01:26 PM</div>
<svg style="left:1260px;top:964px;" width="12" height="12" viewBox="0 0 12 12"><rect x="8.5" y="2.5" width="1.6" height="1.6" fill="#bdbdbd"/><rect x="5.5" y="5.5" width="1.6" height="1.6" fill="#bdbdbd"/><rect x="8.5" y="5.5" width="1.6" height="1.6" fill="#bdbdbd"/><rect x="2.5" y="8.5" width="1.6" height="1.6" fill="#bdbdbd"/><rect x="5.5" y="8.5" width="1.6" height="1.6" fill="#bdbdbd"/><rect x="8.5" y="8.5" width="1.6" height="1.6" fill="#bdbdbd"/></svg>
<div style="left:323px;top:265px;width:874px;height:380px;background:#fff;border:1px solid #3382d6;box-shadow:0 0 0 1px rgba(130,185,240,.45),0 3px 14px 2px rgba(0,0,0,.17)"></div>
<div class="s" style="left:328px;top:270px;letter-spacing:0">Shift Timetable Maintenance</div>
<svg style="left:1175px;top:272px;" width="12" height="12" viewBox="0 0 12 12"><path d="M1 1L11 11M11 1L1 11" stroke="#111" stroke-width="1.05" fill="none"/></svg>
<div style="left:325px;top:292px;width:618px;height:351px;border:1px solid #9d9d92;border-left-color:#fff;border-bottom-color:#fff;background:#fff"></div>
<div style="left:326px;top:293px;width:600px;height:17px;background:linear-gradient(180deg,#f3f1e6,#e8e5d5)"></div>
<div style="left:326px;top:310px;width:600px;height:1px;background:#000"></div>
<div style="left:326px;top:311px;width:11px;height:143px;background:#ece9d8"></div>
<div style="left:337px;top:293px;width:1px;height:161px;background:#000"></div>
<div style="left:338px;top:293px;width:588px;height:17px;overflow:hidden">
<div class="t" style="position:absolute;left:2px;top:2px;;letter-spacing:-0.81px">Timetable Name</div>
<div class="t" style="position:absolute;left:115px;top:2px;;letter-spacing:-0.78px">On-duty Time</div>
<div class="t" style="position:absolute;left:198px;top:2px;;letter-spacing:-0.69px">Off-duty Time</div>
<div class="t" style="position:absolute;left:281px;top:2px;;letter-spacing:-0.56px">Beginning C/In</div>
<div class="t" style="position:absolute;left:370px;top:2px;;letter-spacing:-0.52px">Ending C/In</div>
<div class="t" style="position:absolute;left:447px;top:2px;;letter-spacing:-0.61px">Beginning C/Out</div>
<div class="t" style="position:absolute;left:547px;top:2px;">Ending C/Out</div>
</div>
<div style="left:450px;top:293px;width:1px;height:17px;background:#000"></div>
<div style="left:450px;top:311px;width:1px;height:143px;background:#c0c0c0"></div>
<div style="left:533px;top:293px;width:1px;height:17px;background:#000"></div>
<div style="left:533px;top:311px;width:1px;height:143px;background:#c0c0c0"></div>
<div style="left:616px;top:293px;width:1px;height:17px;background:#000"></div>
<div style="left:616px;top:311px;width:1px;height:143px;background:#c0c0c0"></div>
<div style="left:705px;top:293px;width:1px;height:17px;background:#000"></div>
<div style="left:705px;top:311px;width:1px;height:143px;background:#c0c0c0"></div>
<div style="left:782px;top:293px;width:1px;height:17px;background:#000"></div>
<div style="left:782px;top:311px;width:1px;height:143px;background:#c0c0c0"></div>
<div style="left:882px;top:293px;width:1px;height:17px;background:#000"></div>
<div style="left:882px;top:311px;width:1px;height:143px;background:#c0c0c0"></div>
<div style="left:338px;top:328px;width:588px;height:1px;background:#c0c0c0"></div>
<div style="left:326px;top:328px;width:12px;height:1px;background:#000"></div>
<div class="t" style="left:340px;top:313px;;letter-spacing:-0.44px">Start 6:00 To 5:00</div>
<div class="t" style="left:453px;top:313px;;letter-spacing:-0.51px">06:00</div>
<div class="t" style="left:536px;top:313px;;letter-spacing:-0.51px">17:00</div>
<div class="t" style="left:619px;top:313px;;letter-spacing:-0.51px">05:00</div>
<div class="t" style="left:708px;top:313px;;letter-spacing:-0.51px">12:00</div>
<div class="t" style="left:785px;top:313px;;letter-spacing:-0.51px">12:00</div>
<div class="t" style="left:885px;top:313px;;letter-spacing:-0.51px">20:00</div>
<div style="left:338px;top:346px;width:588px;height:1px;background:#c0c0c0"></div>
<div style="left:326px;top:346px;width:12px;height:1px;background:#000"></div>
<div class="t" style="left:340px;top:331px;;letter-spacing:-0.44px">Start 6:00 To 7:00</div>
<div class="t" style="left:453px;top:331px;;letter-spacing:-0.51px">06:00</div>
<div class="t" style="left:536px;top:331px;;letter-spacing:-0.51px">19:00</div>
<div class="t" style="left:619px;top:331px;;letter-spacing:-0.51px">05:00</div>
<div class="t" style="left:708px;top:331px;;letter-spacing:-0.51px">12:00</div>
<div class="t" style="left:785px;top:331px;;letter-spacing:-0.51px">12:00</div>
<div class="t" style="left:885px;top:331px;;letter-spacing:-0.51px">20:00</div>
<div style="left:338px;top:364px;width:588px;height:1px;background:#c0c0c0"></div>
<div style="left:326px;top:364px;width:12px;height:1px;background:#000"></div>
<div class="t" style="left:340px;top:349px;;letter-spacing:-0.44px">Start 6:30 To 5:00</div>
<div class="t" style="left:453px;top:349px;;letter-spacing:-0.51px">06:30</div>
<div class="t" style="left:536px;top:349px;;letter-spacing:-0.51px">17:00</div>
<div class="t" style="left:619px;top:349px;;letter-spacing:-0.51px">05:00</div>
<div class="t" style="left:708px;top:349px;;letter-spacing:-0.51px">12:00</div>
<div class="t" style="left:785px;top:349px;;letter-spacing:-0.51px">12:00</div>
<div class="t" style="left:885px;top:349px;;letter-spacing:-0.51px">20:00</div>
<div style="left:338px;top:382px;width:588px;height:1px;background:#c0c0c0"></div>
<div style="left:326px;top:382px;width:12px;height:1px;background:#000"></div>
<div class="t" style="left:340px;top:367px;;letter-spacing:-0.44px">Start 7:00 To 5:00</div>
<div class="t" style="left:453px;top:367px;;letter-spacing:-0.51px">07:00</div>
<div class="t" style="left:536px;top:367px;;letter-spacing:-0.51px">17:00</div>
<div class="t" style="left:619px;top:367px;;letter-spacing:-0.51px">05:00</div>
<div class="t" style="left:708px;top:367px;;letter-spacing:-0.51px">12:00</div>
<div class="t" style="left:785px;top:367px;;letter-spacing:-0.51px">12:00</div>
<div class="t" style="left:885px;top:367px;;letter-spacing:-0.51px">20:00</div>
<div style="left:338px;top:400px;width:588px;height:1px;background:#c0c0c0"></div>
<div style="left:326px;top:400px;width:12px;height:1px;background:#000"></div>
<div style="left:451px;top:383px;width:82px;height:17px;background:#3399ff;outline:1px dotted #000;outline-offset:-1px"></div>
<svg style="left:329px;top:387px;" width="6" height="10" viewBox="0 0 6 10"><path d="M0 0L5 5L0 10Z" fill="#000"/></svg>
<div class="t" style="left:340px;top:385px;;letter-spacing:-0.44px">Start 7:15 To 4:45</div>
<div class="t" style="left:453px;top:385px;color:#fff;letter-spacing:-0.51px">07:15</div>
<div class="t" style="left:536px;top:385px;;letter-spacing:-0.51px">16:45</div>
<div class="t" style="left:619px;top:385px;;letter-spacing:-0.51px">05:00</div>
<div class="t" style="left:708px;top:385px;;letter-spacing:-0.51px">12:00</div>
<div class="t" style="left:785px;top:385px;;letter-spacing:-0.51px">12:00</div>
<div class="t" style="left:885px;top:385px;;letter-spacing:-0.51px">20:00</div>
<div style="left:338px;top:418px;width:588px;height:1px;background:#c0c0c0"></div>
<div style="left:326px;top:418px;width:12px;height:1px;background:#000"></div>
<div class="t" style="left:340px;top:403px;;letter-spacing:-0.45px">Start 7:30 To 12:00</div>
<div class="t" style="left:453px;top:403px;;letter-spacing:-0.51px">07:00</div>
<div class="t" style="left:536px;top:403px;;letter-spacing:-0.51px">12:00</div>
<div class="t" style="left:619px;top:403px;;letter-spacing:-0.51px">05:00</div>
<div class="t" style="left:708px;top:403px;;letter-spacing:-0.51px">09:00</div>
<div class="t" style="left:785px;top:403px;;letter-spacing:-0.51px">09:00</div>
<div class="t" style="left:885px;top:403px;;letter-spacing:-0.51px">13:00</div>
<div style="left:338px;top:436px;width:588px;height:1px;background:#c0c0c0"></div>
<div style="left:326px;top:436px;width:12px;height:1px;background:#000"></div>
<div class="t" style="left:340px;top:421px;;letter-spacing:-0.44px">Start 8:00 To 6:00</div>
<div class="t" style="left:453px;top:421px;;letter-spacing:-0.51px">08:00</div>
<div class="t" style="left:536px;top:421px;;letter-spacing:-0.51px">18:00</div>
<div class="t" style="left:619px;top:421px;;letter-spacing:-0.51px">05:00</div>
<div class="t" style="left:708px;top:421px;;letter-spacing:-0.51px">09:00</div>
<div class="t" style="left:785px;top:421px;;letter-spacing:-0.51px">16:00</div>
<div class="t" style="left:885px;top:421px;;letter-spacing:-0.51px">20:00</div>
<div style="left:338px;top:454px;width:588px;height:1px;background:#c0c0c0"></div>
<div style="left:326px;top:454px;width:12px;height:1px;background:#000"></div>
<div class="t" style="left:340px;top:439px;;letter-spacing:-0.44px">Start 1:00 To 4:30</div>
<div class="t" style="left:453px;top:439px;;letter-spacing:-0.51px">13:00</div>
<div class="t" style="left:536px;top:439px;;letter-spacing:-0.51px">16:30</div>
<div class="t" style="left:619px;top:439px;;letter-spacing:-0.51px">12:00</div>
<div class="t" style="left:708px;top:439px;;letter-spacing:-0.51px">14:00</div>
<div class="t" style="left:785px;top:439px;;letter-spacing:-0.51px">14:00</div>
<div class="t" style="left:885px;top:439px;;letter-spacing:-0.51px">17:00</div>
<div style="left:926px;top:293px;width:16px;height:334px;background:linear-gradient(90deg,#f3f1ec,#fefefb)"></div>
<div style="left:927px;top:295px;width:14px;height:14px;background:linear-gradient(135deg,#d2defa,#b5c8f3);border:1px solid #fff;border-radius:2px;box-shadow:0 0 0 1px #c0ccec"></div>
<svg style="left:929px;top:298px;" width="10" height="8" viewBox="0 0 10 8"><path d="M1 6L5 2L9 6" stroke="#4d6185" stroke-width="2" fill="none"/></svg>
<div style="left:927px;top:391px;width:14px;height:157px;background:linear-gradient(90deg,#c3d4fb 0%,#b5c9f8 50%,#a9c0f5 100%);border:1px solid #d7e2fc;border-radius:2px"></div>
<svg style="left:930px;top:466px;" width="8" height="8" viewBox="0 0 8 8"><rect x="0" y="1" width="7" height="1" fill="#9fb6e8"/><rect x="0" y="3" width="7" height="1" fill="#9fb6e8"/><rect x="0" y="5" width="7" height="1" fill="#9fb6e8"/><rect x="0" y="7" width="7" height="1" fill="#9fb6e8"/></svg>
<div style="left:927px;top:611px;width:14px;height:14px;background:linear-gradient(135deg,#d2defa,#b5c8f3);border:1px solid #fff;border-radius:2px;box-shadow:0 0 0 1px #c0ccec"></div>
<svg style="left:929px;top:614px;" width="10" height="8" viewBox="0 0 10 8"><path d="M1 2L5 6L9 2" stroke="#4d6185" stroke-width="2" fill="none"/></svg>
<div style="left:326px;top:627px;width:600px;height:15px;background:linear-gradient(180deg,#f3f1ec,#fefefb)"></div>
<div style="left:926px;top:627px;width:16px;height:15px;background:#ece9d8"></div>
<div style="left:328px;top:628px;width:13px;height:13px;background:linear-gradient(135deg,#d2defa,#b5c8f3);border:1px solid #fff;border-radius:2px;box-shadow:0 0 0 1px #c0ccec"></div>
<svg style="left:331px;top:630px;" width="8" height="10" viewBox="0 0 8 10"><path d="M6 1L2 5L6 9" stroke="#4d6185" stroke-width="2" fill="none"/></svg>
<div style="left:343px;top:628px;width:15px;height:13px;background:linear-gradient(180deg,#c3d4fb,#a9c0f5);border:1px solid #d7e2fc;border-radius:2px"></div>
<svg style="left:347px;top:631px;" width="8" height="8" viewBox="0 0 8 8"><rect x="0" y="0" width="1" height="7" fill="#9fb6e8"/><rect x="2" y="0" width="1" height="7" fill="#9fb6e8"/><rect x="4" y="0" width="1" height="7" fill="#9fb6e8"/><rect x="6" y="0" width="1" height="7" fill="#9fb6e8"/></svg>
<div style="left:910px;top:628px;width:13px;height:13px;background:linear-gradient(135deg,#d2defa,#b5c8f3);border:1px solid #fff;border-radius:2px;box-shadow:0 0 0 1px #c0ccec"></div>
<svg style="left:913px;top:630px;" width="8" height="10" viewBox="0 0 8 10"><path d="M2 1L6 5L2 9" stroke="#4d6185" stroke-width="2" fill="none"/></svg>
<div style="left:944px;top:292px;width:251px;height:352px;background:#ece9d8;border:1px solid #fff;border-right-color:#f4f2ea;border-bottom-color:#f4f2ea;box-shadow:-1px -1px 0 #aca899"></div>
<div style="left:946px;top:294px;width:247px;height:39px;border:1px solid #aca899;box-shadow:inset 1px 1px 0 #f8f6ee,1px 1px 0 #fff"></div>
<div style="left:954px;top:301px;width:75px;height:25px;border:1px solid #2c4a66;border-radius:3px;background:linear-gradient(180deg,#fff 0%,#f5f5f0 50%,#e9e8df 85%,#d8d3c8 100%)"></div>
<svg style="left:973px;top:306px;" width="14" height="14" viewBox="0 0 14 14"><path d="M7 1.5V12.5M1.5 7H12.5" stroke="#1c62c8" stroke-width="3.2" fill="none"/></svg>
<div class="t" style="left:991px;top:307px;;letter-spacing:-0.53px">Add</div>
<div style="left:1034px;top:301px;width:75px;height:25px;border:1px solid #2c4a66;border-radius:3px;background:linear-gradient(180deg,#fff 0%,#f5f5f0 50%,#e9e8df 85%,#d8d3c8 100%)"></div>
<svg style="left:1053px;top:306px;" width="14" height="14" viewBox="0 0 14 14"><path d="M1.5 7.5L5.5 11.5L13 2.5" stroke="#3f7fdc" stroke-width="2.6" fill="none"/></svg>
<div class="t" style="left:1071px;top:307px;;letter-spacing:-0.74px">Post</div>
<div style="left:1114px;top:301px;width:75px;height:25px;border:1px solid #2c4a66;border-radius:3px;background:linear-gradient(180deg,#fff 0%,#f5f5f0 50%,#e9e8df 85%,#d8d3c8 100%)"></div>
<svg style="left:1128px;top:306px;" width="14" height="14" viewBox="0 0 14 14"><path d="M2 2L12 12M12 2L2 12" stroke="#cc1010" stroke-width="2.4" fill="none"/></svg>
<div class="t" style="left:1146px;top:307px;;letter-spacing:-0.62px">Delete</div>
<div style="left:1110px;top:341px;width:65px;height:21px;background:#fff;border:1px solid #8c8c84;border-right-color:#e4e1d4;border-bottom-color:#c4c1b4;overflow:hidden"><div class="t" style="position:absolute;top:2px;left:2px;letter-spacing:-0.15px">Start 7:15 To</div></div>
<div class="t r" style="left:904px;top:347px;width:200px;;letter-spacing:-0.81px">Timetable Name</div>
<div style="left:1110px;top:361px;width:65px;height:21px;background:#fff;border:1px solid #8c8c84;border-right-color:#e4e1d4;border-bottom-color:#c4c1b4;overflow:hidden"><div class="t" style="position:absolute;top:2px;left:2px;">07:15</div></div>
<div class="t r" style="left:904px;top:367px;width:200px;;letter-spacing:-0.73px">On Duty Time</div>
<div style="left:1110px;top:381px;width:65px;height:21px;background:#fff;border:1px solid #8c8c84;border-right-color:#e4e1d4;border-bottom-color:#c4c1b4;overflow:hidden"><div class="t" style="position:absolute;top:2px;left:2px;">16:45</div></div>
<div class="t r" style="left:904px;top:387px;width:200px;;letter-spacing:-0.65px">Off Duty Time</div>
<div style="left:1110px;top:402px;width:65px;height:21px;background:#fff;border:1px solid #8c8c84;border-right-color:#e4e1d4;border-bottom-color:#c4c1b4;overflow:hidden"><div class="t" style="position:absolute;top:2px;right:4px;">0</div></div>
<div class="t r" style="left:904px;top:408px;width:200px;;letter-spacing:-0.73px">Late Time(Mins)</div>
<div style="left:1110px;top:422px;width:65px;height:21px;background:#fff;border:1px solid #8c8c84;border-right-color:#e4e1d4;border-bottom-color:#c4c1b4;overflow:hidden"><div class="t" style="position:absolute;top:2px;right:4px;">0</div></div>
<div class="t r" style="left:904px;top:428px;width:200px;;letter-spacing:-0.72px">Leave Early Time(Mins)</div>
<div style="left:1110px;top:443px;width:65px;height:21px;background:#fff;border:1px solid #8c8c84;border-right-color:#e4e1d4;border-bottom-color:#c4c1b4;overflow:hidden"><div class="t" style="position:absolute;top:2px;left:2px;">05:00</div></div>
<div class="t r" style="left:904px;top:449px;width:200px;;letter-spacing:-0.63px">Beginning In</div>
<div style="left:1110px;top:463px;width:65px;height:21px;background:#fff;border:1px solid #8c8c84;border-right-color:#e4e1d4;border-bottom-color:#c4c1b4;overflow:hidden"><div class="t" style="position:absolute;top:2px;left:2px;">12:00</div></div>
<div class="t r" style="left:904px;top:469px;width:200px;;letter-spacing:-0.65px">Ending In</div>
<div style="left:1110px;top:484px;width:65px;height:21px;background:#fff;border:1px solid #8c8c84;border-right-color:#e4e1d4;border-bottom-color:#c4c1b4;overflow:hidden"><div class="t" style="position:absolute;top:2px;left:2px;">12:00</div></div>
<div class="t r" style="left:904px;top:490px;width:200px;;letter-spacing:-0.69px">Beginning Out</div>
<div style="left:1110px;top:504px;width:65px;height:21px;background:#fff;border:1px solid #8c8c84;border-right-color:#e4e1d4;border-bottom-color:#c4c1b4;overflow:hidden"><div class="t" style="position:absolute;top:2px;left:2px;">20:00</div></div>
<div class="t r" style="left:904px;top:510px;width:200px;;letter-spacing:-0.68px">Ending Out</div>
<div style="left:1110px;top:525px;width:65px;height:21px;background:#fff;border:1px solid #8c8c84;border-right-color:#e4e1d4;border-bottom-color:#c4c1b4;overflow:hidden"><div class="t" style="position:absolute;top:2px;right:4px;">1</div></div>
<div class="t r" style="left:904px;top:531px;width:200px;;letter-spacing:-0.66px">Count as Workday</div>
<div style="left:1110px;top:549px;width:65px;height:21px;background:#fff;border:1px solid #8c8c84;border-right-color:#e4e1d4;border-bottom-color:#c4c1b4;overflow:hidden"><div class="t" style="position:absolute;top:2px;right:4px;">0</div></div>
<div class="t r" style="left:904px;top:555px;width:200px;;letter-spacing:-0.8px">Count as minute(minute)</div>
<div style="left:1013px;top:583px;width:13px;height:13px;background:linear-gradient(135deg,#dcdcd5,#fff);border:1px solid #1c5180"></div>
<svg style="left:1015px;top:585px;" width="9" height="9" viewBox="0 0 9 9"><path d="M1 4L3.5 6.5L8 1.5" stroke="#21a121" stroke-width="2" fill="none"/></svg>
<div class="t" style="left:1029px;top:583px;;letter-spacing:-0.42px">Must C/In</div>
<div style="left:1093px;top:583px;width:13px;height:13px;background:linear-gradient(135deg,#dcdcd5,#fff);border:1px solid #1c5180"></div>
<svg style="left:1095px;top:585px;" width="9" height="9" viewBox="0 0 9 9"><path d="M1 4L3.5 6.5L8 1.5" stroke="#21a121" stroke-width="2" fill="none"/></svg>
<div class="t" style="left:1109px;top:583px;;letter-spacing:-0.57px">Must C/Out</div>
<div style="left:959px;top:611px;width:34px;height:19px;border:1px solid #aca899;border-right-color:#fff;border-bottom-color:#fff;background:#ece9d8"></div>
<div class="t" style="left:1008px;top:614px;color:#0000c8;text-decoration:underline;letter-spacing:-0.74px">Change the Display Color</div>
<div style="left:0px;top:984px;width:1280px;height:40px;background:#06090f"></div>
<div style="left:0px;top:984px;width:48px;height:40px;background:#03060c"></div>
<div style="left:48px;top:984px;width:344px;height:40px;background:#3b3b3b"></div>
<div class="s" style="left:60px;top:996px;color:#a2a2a2;font-size:15px;letter-spacing:-0.15px;line-height:18px;height:18px">Search the web and Windows</div>
<svg style="left:16px;top:996px;" width="16" height="16" viewBox="0 0 16 16"><path d="M0 2.3L6.6 1.4V7.6H0ZM7.4 1.3L16 0V7.6H7.4ZM0 8.4H6.6V14.6L0 13.7ZM7.4 8.4H16V16L7.4 14.7Z" fill="#fff"/></svg>
<svg style="left:406px;top:996px;" width="21" height="16" viewBox="0 0 21 16"><rect x="4.5" y="1.5" width="12" height="12" fill="none" stroke="#fff" stroke-width="1.2"/><path d="M3 3.5H0.6V11.5H3M18 3.5H20.4V11.5H18" fill="none" stroke="#fff" stroke-width="1.2"/></svg>
<svg style="left:455px;top:992px;" width="23" height="24" viewBox="0 0 23 24"><path d="M1.2 11.6C1.8 5 6.2 1.2 11.8 1.2C18 1.2 21.8 5.6 21.8 11V13.6H8.2C8.4 17 11 18.6 14.2 18.6C16.6 18.6 18.8 17.9 20.8 16.8V21.2C18.6 22.4 16.2 23 13.2 23C7 23 3.4 19 3.4 14C3.4 10.6 5.2 8 8 6.6C6.6 7.8 8.2 9 8.2 10H15.6C15.6 7.2 14 5.2 10.8 5.2C6.4 5.2 2.6 8 1.2 11.6Z" fill="#1e88e5"/></svg>
<svg style="left:503px;top:990px;" width="24" height="26" viewBox="0 0 24 26"><path d="M7.5 7.5V5.5C7.5 3 9.2 1.4 11.6 1.4S15.6 3 15.6 5.5V7.5" fill="none" stroke="#fff" stroke-width="1.3"/><path d="M1.2 8.4L22.4 6V25.4L1.2 22.6Z" fill="#fff"/><path d="M6 12.2L10.6 11.6V15.6H6ZM11.6 11.5L17.4 10.8V15.6H11.6ZM6 16.6H10.6V20.6L6 20ZM11.6 16.6H17.4V21.4L11.6 20.7Z" fill="#06090f"/></svg>
<svg style="left:552px;top:991px;" width="26" height="26" viewBox="0 0 26 26"><defs><radialGradient id="tkA" cx=".4" cy=".35" r=".75"><stop offset="0" stop-color="#ffffff"/><stop offset=".7" stop-color="#dde3f4"/><stop offset="1" stop-color="#a8b4d8"/></radialGradient></defs><circle cx="13" cy="13" r="11.4" fill="url(#tkA)"/><path d="M20.6 3.6A12 12 0 0 1 23.6 17" fill="none" stroke="#e83878" stroke-width="1.5"/><path d="M3.4 19.6A12 12 0 0 0 17 24.2" fill="none" stroke="#e83878" stroke-width="1.7"/><path d="M5 7.6C8.4 2.8 17 2.6 20.6 7.4C16.8 5.8 12.6 6.8 12.6 9.6C12.8 12.6 19.6 11.8 20.2 16C20.8 20.4 15.4 23.4 9.6 21.6C13.6 21.4 16 19.2 15.2 17.4C14.2 15 7.2 15.6 5 7.6Z" fill="#3c6cd0"/><path d="M6 8C9 4.6 14 4.2 17 5.6C13 5.4 9.4 6.8 9.6 10Z" fill="#7aa0ec"/></svg>
<svg style="left:601px;top:993px;" width="24" height="21" viewBox="0 0 24 21"><path d="M1 3.2C1 2.4 1.4 2 2.2 2H9L11 4H21.8C22.6 4 23 4.4 23 5.2V18.4H1Z" fill="#f4c84c"/><path d="M1 7H23V19.4H1Z" fill="#fbdc7c"/><path d="M5.4 19.4V13.2H18.6V19.4H15.4V15.8H8.6V19.4Z" fill="#3ca8e8"/><path d="M1 18.2H23V19.6H1Z" fill="#e8b838" opacity=".0"/></svg>
<div style="left:593px;top:1022px;width:40px;height:2px;background:#86b4e6"></div>
<svg style="left:651px;top:992px;" width="24" height="23" viewBox="0 0 24 23"><path d="M9 2.6H22.6V20.4H9Z" fill="#fff"/><path d="M15 6H21M15 8.6H21M15 11.2H21M15 13.8H21M15 16.4H21" stroke="#2b579a" stroke-width="1.2"/><path d="M0.6 2.6L13.6 0.4V22.6L0.6 20.4Z" fill="#2b579a"/><path d="M3 7.4L4.8 15.8L7 9.4L9.2 15.8L11 7.4" fill="none" stroke="#fff" stroke-width="1.5"/></svg>
<svg style="left:700px;top:992px;" width="24" height="23" viewBox="0 0 24 23"><path d="M9 2.6H22.6V20.4H9Z" fill="#fff" stroke="#1e7145" stroke-width=".8"/><path d="M14 5.4H21.6M14 8.6H21.6M14 11.8H21.6M14 15H21.6M14 18H21.6M17.8 2.6V20.4" stroke="#1e7145" stroke-width="1"/><path d="M0.6 2.6L13.6 0.4V22.6L0.6 20.4Z" fill="#1e7145"/><path d="M4 7.4L10 15.8M10 7.4L4 15.8" fill="none" stroke="#fff" stroke-width="1.7"/></svg>
<svg style="left:748px;top:992px;" width="25" height="23" viewBox="0 0 25 23"><path d="M11 5.6H24V17.8H11Z" fill="#fff" stroke="#0a64b8" stroke-width="1"/><path d="M11.6 6.4L17.6 12L23.4 6.4" fill="none" stroke="#0a64b8" stroke-width="1.4"/><path d="M0.6 2.6L13.6 0.4V22.6L0.6 20.4Z" fill="#0a72c8"/><ellipse cx="7" cy="11.6" rx="3" ry="3.8" fill="none" stroke="#fff" stroke-width="1.7"/></svg>
<svg style="left:796px;top:993px;" width="26" height="23" viewBox="0 0 26 23"><g transform="rotate(-38 13 11.5)"><rect x="2.6" y="8.6" width="5.4" height="6" fill="#d8d8d8"/><rect x="3.6" y="10" width="1.4" height="1.2" fill="#444"/><rect x="3.6" y="12" width="1.4" height="1.2" fill="#444"/><rect x="8" y="7" width="16.4" height="9.2" rx="2" fill="#6e6e6e"/><rect x="11" y="8.2" width="9" height="6.8" rx="1" fill="#8c8c8c"/></g></svg>
<svg style="left:845px;top:991px;" width="26" height="26" viewBox="0 0 26 26"><defs><radialGradient id="tkB" cx=".45" cy=".35" r=".75"><stop offset="0" stop-color="#a0d860"/><stop offset="1" stop-color="#62ac30"/></radialGradient></defs><circle cx="13" cy="13" r="12" fill="url(#tkB)"/><g transform="rotate(-14 13 13)"><path d="M8.4 6.4V22.4" stroke="#fff" stroke-width="3"/><path d="M8.4 13C8.4 16.6 10 17.8 12.2 17.8S16.6 16.4 16.6 13V6" fill="none" stroke="#fff" stroke-width="3"/><path d="M16.6 12V15.2C16.6 17 17.6 17.8 20 17.4" fill="none" stroke="#fff" stroke-width="2.6"/></g></svg>
<div style="left:838px;top:1022px;width:40px;height:2px;background:#86b4e6"></div>
<div style="left:883px;top:984px;width:48px;height:38px;background:#3f4042"></div>
<div style="left:883px;top:1022px;width:48px;height:2px;background:#8cc0f0"></div>
<svg style="left:896px;top:991px;" width="25" height="25" viewBox="0 0 25 25"><path d="M10.4 1.4L23.2 14.8L21.6 17.4L11.6 23.6L1 12.2Z" fill="#f9eada"/><path d="M1.2 12.4L10.4 1.6L23.2 15" fill="none" stroke="#0c0c0c" stroke-width="2.2" stroke-linejoin="miter"/><path d="M9 13.4C11 11.6 15 11.4 18 12.4C21 13.4 22.4 15.2 21.8 17.2C19 19 14.6 18.6 12.6 17.2Z" fill="#eea078"/><path d="M8.2 13.6L14 12.6L19.8 14" fill="none" stroke="#1a0c08" stroke-width="1.5"/><path d="M9.4 13.4L13.4 14.6L12.6 12.6Z" fill="#c02010"/><path d="M21.6 14.6V18" stroke="#0c0c0c" stroke-width="1.6"/></svg>
<svg style="left:944px;top:992px;" width="25" height="25" viewBox="0 0 25 25"><defs><linearGradient id="tkC" x1="0" y1="1" x2="1" y2="0"><stop offset="0" stop-color="#e0401c"/><stop offset=".45" stop-color="#f47a18"/><stop offset="1" stop-color="#ffd23c"/></linearGradient><radialGradient id="tkD" cx=".55" cy=".3" r=".75"><stop offset="0" stop-color="#58b8f4"/><stop offset=".6" stop-color="#2474d0"/><stop offset="1" stop-color="#143c90"/></radialGradient></defs><circle cx="12.4" cy="12.6" r="11.4" fill="url(#tkC)"/><circle cx="13.4" cy="10.4" r="7.4" fill="url(#tkD)"/><path d="M2.6 7.4C4.6 8.8 7.6 8.4 9 10C10 11.4 8.6 13.2 10.4 14.6C12.4 16.2 15.8 15.4 17.4 13.6C18.4 15.8 18.2 18.6 16 21C12 24 5.2 22.6 2.2 17.6C1 14.2 1.4 10.2 2.6 7.4Z" fill="#f06a1c"/><path d="M20.6 5.6C23 8.6 23.6 13.4 21.6 17.4C22 13.6 21.4 10.6 19.6 8.4Z" fill="#ffd23c"/></svg>
<div style="left:936px;top:1022px;width:40px;height:2px;background:#86b4e6"></div>
<svg style="left:1070px;top:999px;" width="13" height="9" viewBox="0 0 13 9"><path d="M1 7.4L6.5 1.6L12 7.4" fill="none" stroke="#fff" stroke-width="1.3"/></svg>
<svg style="left:1092px;top:997px;" width="17" height="15" viewBox="0 0 17 15"><rect x="3.6" y="1.6" width="12.6" height="8.8" fill="none" stroke="#fff" stroke-width="1.1"/><path d="M9.8 10.4V13.4M5.6 13.6H14" stroke="#fff" stroke-width="1.1"/><rect x="0.6" y="1" width="3.6" height="3.6" fill="#06090f" stroke="#fff" stroke-width="1"/><path d="M2.4 4.6V13.6H5.6" fill="none" stroke="#fff" stroke-width="1"/></svg>
<svg style="left:1115px;top:997px;" width="18" height="16" viewBox="0 0 18 16"><path d="M1.2 5H3.6L7 1.4V12.6L3.6 9H1.2Z" fill="none" stroke="#fff" stroke-width="1.1" stroke-linejoin="round"/><circle cx="12.6" cy="11" r="4.2" fill="#e81c2c"/><path d="M10.8 9.2L14.4 12.8M14.4 9.2L10.8 12.8" stroke="#fff" stroke-width="1.2"/></svg>
<svg style="left:1140px;top:995px;" width="17" height="18" viewBox="0 0 17 18"><path d="M0.4 0.8H16.4V13H10.6L8.4 16L6.2 13H0.4Z" fill="#fff"/><path d="M3 4H13.6M3 6.8H13.6M3 9.6H10.4" stroke="#06090f" stroke-width="1.2"/></svg>
<div class="s" style="left:1166px;top:996px;color:#fff;font-size:11.5px;letter-spacing:-0.2px">ENG</div>
<div class="s" style="left:1214px;top:987px;color:#fff;font-size:12px;letter-spacing:-0.4px">1:01 PM</div>
<div class="s" style="left:1206px;top:1003px;color:#fff;font-size:12.5px;letter-spacing:-0.4px">09/07/2015</div>
<div style="left:1275px;top:984px;width:1px;height:40px;background:#3a4050"></div>
</body>
</html>
